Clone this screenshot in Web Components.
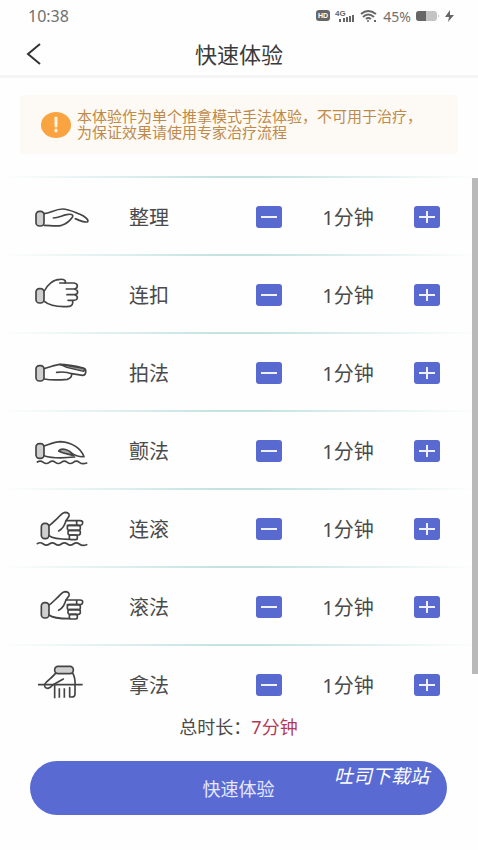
<!DOCTYPE html>
<html lang="zh-CN">
<head>
<meta charset="utf-8">
<meta name="viewport" content="width=device-width, initial-scale=1">
<title>快速体验</title>
<style>
html, body { margin: 0; background: #fefefe; }
body { font-family: "Noto Sans", "Noto Sans CJK SC", sans-serif; color: #4a4a4a; }
</style>
</head>
<body>
<quick-app></quick-app>
<script>
function define(name, html, setup) {
  const template = document.createElement('template');
  template.innerHTML = html;
  customElements.define(name, class extends HTMLElement {
    constructor() {
      super();
      this.attachShadow({ mode: 'open' }).append(template.content.cloneNode(true));
    }
    connectedCallback() { if (setup) setup(this, this.shadowRoot); }
  });
}

const cuff = (x, y, w, h) => `<rect x="${x}" y="${y}" width="${w}" height="${h}" rx="10" fill="#cfcfcf"/>`;
const fist = cuff(64, 70, 23, 46) + `
  <path d="M87 77C97 71 105 61 112 55C121 47 126 37 137 37Q150 39 147 49L138 62C133 76 130 85 116 93"/>
  <path d="M138 62H180Q189 62 188 69Q187 76 180 76H142M170 62V76"/>
  <rect x="142" y="76" width="39" height="15" rx="6"/><rect x="144" y="91" width="37" height="14" rx="6"/>
  <rect x="148" y="105" width="24" height="14" rx="5"/><path d="M87 107C100 118 125 118 148 118"/>`;
const ICONS = {
  smooth: ['30 15 192 132', cuff(48, 64, 24, 44) + `<path d="M72 71C92 70 104 57 128 57C145 57 160 65 180 73C195 79 207 90 203 95C198 100 180 92 166 86"/>
    <path d="M100 84C115 84 125 77 140 74C151 71 161 74 158 80C152 89 140 101 125 106C108 110 90 106 72 106"/>`],
  clasp: ['30 249 192 132', cuff(48, 296, 24, 43) + `<path d="M73 303C82 285 100 268 120 268C132 267 139 272 135 279H119"/>
    <path d="M135 279H162Q172 280 172 288Q172 296 162 297H139M162 297Q173 299 173 306Q173 313 164 314H141M164 314Q173 317 172 324Q171 331 160 331H144M158 331Q160 348 148 349C120 351 92 350 73 334"/>`],
  pat: ['30 18 192 132', cuff(48, 62, 24, 46) + `<path d="M120 58L195 71L191 79L140 67Z" fill="#999" stroke-width="4"/>
    <path d="M72 71C90 67 105 59 120 58C145 58 170 64 190 69Q199 73 197 82Q196 91 188 91L155 86M110 82C125 80 145 82 155 86Q156 99 142 103C120 105 90 105 72 102"/>`],
  tremble: ['30 252 192 132', cuff(48, 296, 24, 44) + `<path d="M116 318C124 307 148 312 161 332C145 326 128 326 116 318Z" fill="#aaa"/>
    <path d="M72 303C90 297 105 290 122 290C155 293 182 309 192 335C180 336 170 335 152 323M72 332C90 338 125 340 164 336"/>
    <path d="M52 351q9-6 18 1t18 0t18 0t18 0t18 0t18 0t18 0t22 2"/>`],
  rollwave: ['30 21 192 132', fist + '<path d="M52 131q9-6 18 1t18 0t18 0t18 0t18 0t18 0t18 0t22 2"/>'],
  roll: ['30 17 192 132', fist],
  grasp: ['30 84 192 132', cuff(104, 94, 56, 22) + `<path d="M107 114C100 126 80 137 74 148Q72 160 84 160Q92 158 98 150L130 132M158 114C164 125 166 135 165 150V178Q164 186 156 186H149V158"/>
    <path d="M54 149H188M104 149V190M118 160V188M133 160V188" stroke-linecap="butt"/>`]
};

define('status-bar', `
<style>
:host { display: flex; align-items: center; justify-content: space-between; height: 32px; padding: 0 24px 0 28px; color: #707070; font-size: 16px; }
div { display: flex; align-items: center; gap: 5px; font-size: 14px; }
svg { display: block; }
</style>
<time>10:38</time>
<div>
  <svg width="14" height="12" viewBox="0 0 14 12" aria-hidden="true"><rect width="14" height="11" rx="3" fill="#666"/><text x="7" y="8" font-family="Liberation Sans" font-size="7" font-weight="700" text-anchor="middle" fill="#fff">HD</text></svg>
  <svg width="20" height="16" viewBox="0 0 20 16" aria-hidden="true"><text x="0" y="8" font-family="Liberation Sans" font-size="8" font-weight="700" fill="#666">4G</text><path d="M4 14v-3h2v3zM8 14v-4h2v4zM11 14V9h2v5zM14 14V8h2v6zM17 14V7h2v7z" fill="#666"/></svg>
  <svg width="18" height="14" viewBox="0 0 18 14" fill="none" stroke="#666" stroke-width="2" aria-hidden="true"><path d="M1 5Q8 -1 16 5M3 8Q8 3 14 8M6 10Q8 8 11 10"/><circle cx="8" cy="12" r="1" fill="#666" stroke="none"/><path d="M14 12h2"/></svg>
  <span>45%</span>
  <svg width="24" height="12" viewBox="0 0 24 12" aria-hidden="true"><rect y="1" width="21" height="10" rx="3" fill="#c4c4c4"/><path d="M3 1H10V11H3Q0 11 0 8V4Q0 1 3 1Z" fill="#666"/><path d="M22 4q2 2 0 4z" fill="#c4c4c4"/></svg>
  <svg width="9" height="12" viewBox="0 0 9 12" aria-hidden="true"><path d="M5 0L0 7H4L3 12L9 5H5Z" fill="#666"/></svg>
</div>`);

define('title-bar', `
<style>
:host { display: grid; grid-template-columns: 44px 1fr 44px; align-items: center; height: 43px; padding: 0 12px; border-bottom: 3px solid #f5f5f5; }
h1 { margin: 0; font-size: 22px; line-height: 32px; font-weight: 400; text-align: center; color: #3b3b3b; }
button { width: 44px; height: 40px; padding: 0; border: 0; background: none; display: grid; place-items: center; }
</style>
<button type="button" aria-label="返回"><svg width="16" height="24" viewBox="0 0 16 24" fill="none" stroke="#333" stroke-width="2"><path d="M14 2L2 12L14 22"/></svg></button>
<h1><slot></slot></h1>`);

define('notice-box', `
<style>
:host { display: flex; align-items: center; gap: 6px; margin: 17px 20px 22px; padding: 13px 21px 14px; border-radius: 4px; background: #fdf9f5; color: #bd8a49; }
svg { flex: none; display: block; }
p { margin: 0; font-size: 15px; line-height: 16px; }
</style>
<svg width="30" height="30" viewBox="0 0 30 30" aria-hidden="true"><ellipse cx="15" cy="16" rx="15" ry="13" fill="#f9a440"/><path d="M15 9V17M15 21V22" stroke="#fff3df" stroke-width="3" stroke-linecap="round"/></svg>
<p><slot></slot></p>`);

define('technique-row', `
<style>
:host { display: grid; grid-template-columns: 99px 1fr 26px 132px 26px; align-items: center; height: 78px; box-sizing: border-box; padding: 3px 38px 0 30px;
  background: linear-gradient(90deg, transparent, #c3e3e1 45%, #c3e3e1 55%, transparent) top / 100% 2px no-repeat; }
svg { display: block; }
.hand { fill: none; stroke: #444; stroke-width: 5; stroke-linecap: round; stroke-linejoin: round; }
span, output { font-size: 20px; line-height: 28px; padding-top: 2px; }
output { text-align: center; }
button { width: 26px; height: 22px; padding: 0; border: 0; border-radius: 3px; background: #5869d0; display: grid; place-items: center; }
button path { stroke: #eef0ff; stroke-width: 2; }
</style>
<svg class="hand" width="64" height="44" aria-hidden="true"></svg>
<span><slot></slot></span>
<button type="button" aria-label="减少"><svg width="16" height="14" viewBox="0 0 16 14"><path d="M0 7H16"/></svg></button>
<output>1分钟</output>
<button type="button" aria-label="增加"><svg width="16" height="14" viewBox="0 0 16 14"><path d="M0 7H16M8 1V13"/></svg></button>`,
(host, root) => {
  const [box, shapes] = ICONS[host.getAttribute('icon')];
  const svg = root.querySelector('.hand');
  svg.setAttribute('viewBox', box);
  svg.innerHTML = shapes;
  host.minutes = 1;
  const [less, more] = root.querySelectorAll('button');
  const step = n => {
    host.minutes = Math.max(0, host.minutes + n);
    root.querySelector('output').textContent = host.minutes + '分钟';
    host.dispatchEvent(new CustomEvent('minutes-change', { bubbles: true, composed: true }));
  };
  less.onclick = () => step(-1);
  more.onclick = () => step(1);
});

define('technique-list', `
<style>
:host { display: block; position: relative; flex: 1; min-height: 0; }
.view { height: 100%; overflow-y: auto; scrollbar-width: none; }
.thumb { position: absolute; top: 2px; right: 0; width: 6px; height: 94%; background: #b9b9b9; }
</style>
<div class="view"><slot></slot></div><div class="thumb"></div>`);

define('start-footer', `
<style>
:host { display: block; padding: 11px 31px 35px 30px; }
p { margin: 0 0 22px; font-size: 18px; line-height: 24px; text-align: center; }
output { color: #b03a56; }
.action { position: relative; }
button { display: block; width: 100%; height: 54px; border: 0; border-radius: 27px; background: #596bd3; color: #e4e8ff; font: inherit; font-size: 18px; }
.mark { position: absolute; top: 2px; right: 18px; font-size: 19px; line-height: 26px; font-style: italic; color: #fff; pointer-events: none; }
</style>
<p>总时长：<output>7分钟</output></p>
<div class="action"><button type="button">快速体验</button><span class="mark">吐司下载站</span></div>`);

define('quick-app', `
<style>
:host { display: flex; flex-direction: column; height: 100vh; min-height: 480px; }
</style>
<status-bar></status-bar>
<title-bar>快速体验</title-bar>
<notice-box>本体验作为单个推拿模式手法体验，不可用于治疗，<br>为保证效果请使用专家治疗流程</notice-box>
<technique-list>
  <technique-row icon="smooth">整理</technique-row>
  <technique-row icon="clasp">连扣</technique-row>
  <technique-row icon="pat">拍法</technique-row>
  <technique-row icon="tremble">颤法</technique-row>
  <technique-row icon="rollwave">连滚</technique-row>
  <technique-row icon="roll">滚法</technique-row>
  <technique-row icon="grasp">拿法</technique-row>
</technique-list>
<start-footer></start-footer>`,
(host, root) => {
  root.addEventListener('minutes-change', () => {
    const total = [...root.querySelectorAll('technique-row')].reduce((sum, row) => sum + row.minutes, 0);
    root.querySelector('start-footer').shadowRoot.querySelector('output').textContent = total + '分钟';
  });
});
</script>
</body>
</html>
